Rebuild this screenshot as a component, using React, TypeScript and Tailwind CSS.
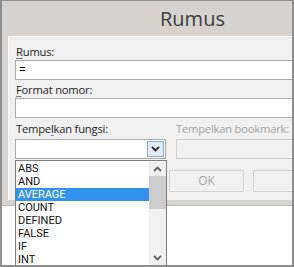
import { ReactNode } from 'react';

const font = { fontFamily: '"Open Sans", "Noto Sans", sans-serif' };
const listFont = { fontFamily: 'Roboto, "Open Sans", sans-serif' };

function Label({ children, disabled }: { children: ReactNode; disabled?: boolean }) {
  return (
    <div
      className={`h-[16px] text-[11.2px] leading-[16px] tracking-[-0.2px] whitespace-nowrap ${
        disabled ? 'text-[#a3a3a3]' : 'text-[#1e1e1e]'
      }`}
    >
      {children}
    </div>
  );
}

function Chevron({ up, className }: { up?: boolean; className?: string }) {
  return (
    <svg width="9" height="6" viewBox="0 0 9 6" className={className}>
      <path
        d={up ? 'M1 5 L4.5 1.5 L8 5' : 'M1 1 L4.5 4.5 L8 1'}
        fill="none"
        stroke="currentColor"
        strokeWidth="1.8"
      />
    </svg>
  );
}

const functions = ['ABS', 'AND', 'AVERAGE', 'COUNT', 'DEFINED', 'FALSE', 'IF', 'INT'];

export default function App() {
  return (
    <div
      className="relative w-[294px] h-[267px] overflow-hidden bg-[#d5d2cf] border-l-2 border-r-2 border-t border-b-2 border-[#8d8d8d] flex flex-col"
      style={font}
    >
      {/* title bar */}
      <div className="h-[35px] shrink-0 pl-[158px] pt-[5px] text-[20px] leading-[26px] text-[#3c3c3c]">
        Rumus
      </div>

      {/* dialog body */}
      <div className="pl-[6px] shrink-0">
        <div className="h-[164px] bg-[#f0f0f0] border-l border-t border-[#fbfbfb] flex flex-col pt-[7px]">
          <div className="pl-[7px]">
            <Label>
              <span className="underline decoration-[#7a7a7a] underline-offset-2">R</span>umus:
            </Label>
          </div>
          <div className="ml-[6px] w-[300px] shrink-0 h-[20px] bg-white border border-[#a9a9a9] text-[12px] leading-[18px] pl-[3px] text-black">
            =
          </div>
          <div className="pl-[7px] mt-[2px]">
            <Label>
              <span className="underline decoration-[#7a7a7a] underline-offset-2">F</span>ormat nomor:
            </Label>
          </div>
          <div className="ml-[6px] w-[300px] shrink-0 h-[20px] bg-white border border-[#a9a9a9]" />
          <div className="pl-[7px] mt-[3px] flex">
            <div className="w-[160px] shrink-0">
              <Label>
                Tempe<span className="underline decoration-[#7a7a7a] underline-offset-2">l</span>kan fungsi:
              </Label>
            </div>
            <Label disabled>Tempelkan bookmark:</Label>
          </div>
          <div className="mt-[2px] ml-[6px] flex gap-[10px]">
            <div className="w-[151px] shrink-0 h-[20px] bg-white border border-[#a9a9a9] flex justify-end items-stretch p-px">
              <div className="w-[17px] bg-[#e3ecf6] border border-[#7eaee0] flex items-center justify-center text-[#2b2b2b]">
                <Chevron />
              </div>
            </div>
            <div className="w-[130px] shrink-0 h-[20px] bg-[#f0f0f0] border border-[#cfcfcf]" />
          </div>
          <div className="mt-[11px] ml-[160px] flex gap-[9px]">
            <div className="w-[75px] shrink-0 h-[22px] border border-[#d4d4d4] bg-[#f0f0f0] flex items-center justify-center text-[12px] text-[#a6a6a6]">
              OK
            </div>
            <div className="w-[75px] shrink-0 h-[22px] border border-[#d4d4d4] bg-[#f0f0f0]" />
          </div>
        </div>
      </div>

      {/* bottom band */}
      <div className="h-[6px] shrink-0 border-b border-[#b9b9b9]" />
      <div className="flex-1 bg-white" />

      {/* open dropdown list */}
      <div
        className="absolute left-[13px] top-[159px] w-[152px] h-[106px] bg-white border border-[#7e7e7e] flex"
        style={listFont}
      >
        <div className="flex-1 flex flex-col pt-[1px]">
          {functions.map((f) => (
            <div
              key={f}
              className={`h-[13px] text-[11px] leading-[13px] pl-[2px] ${
                f === 'AVERAGE' ? 'bg-[#3392ec] text-white' : 'text-[#111]'
              }`}
            >
              {f}
            </div>
          ))}
        </div>
        <div className="w-[17px] bg-[#f0f0f0] flex flex-col items-center">
          <div className="h-[15px] flex items-center justify-center text-[#606060]">
            <Chevron up />
          </div>
          <div className="w-[17px] h-[33px] bg-[#cdcdcd]" />
          <div className="flex-1" />
          <div className="h-[15px] flex items-center justify-center text-[#606060]">
            <Chevron />
          </div>
        </div>
      </div>
    </div>
  );
}
